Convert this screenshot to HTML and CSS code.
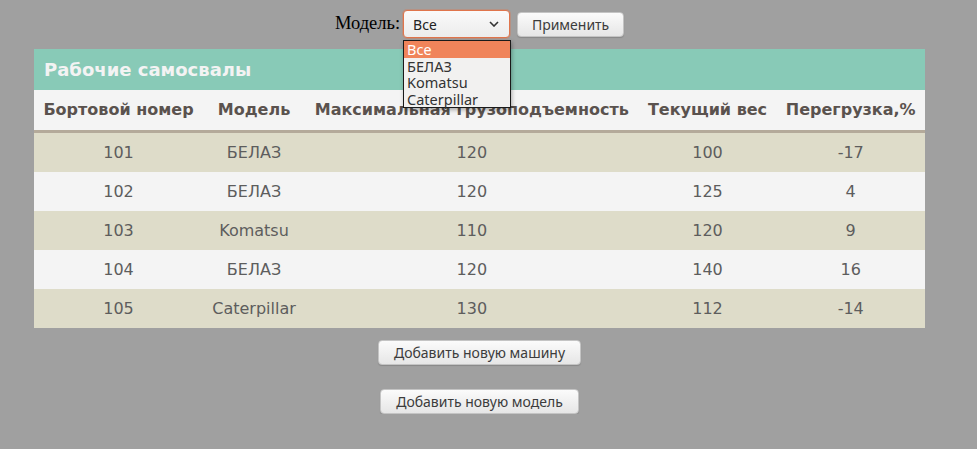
FILE: index.html
```html
<!DOCTYPE html>
<html lang="ru">
<head>
<meta charset="utf-8">
<title>Рабочие самосвалы</title>
<link rel="stylesheet" href="styles.css">
</head>
<body>
<div class="page">
  <form class="filter">
    <label class="filter-label">Модель:</label>
    <div class="select-wrap">
      <div class="select">
        <span>Все</span>
        <svg class="chev" width="10" height="6" viewBox="0 0 10 6"><path d="M1 1 L5 5 L9 1" fill="none" stroke="#333" stroke-width="1.6"/></svg>
      </div>
      <ul class="options">
        <li class="opt active">Все</li>
        <li class="opt">БЕЛАЗ</li>
        <li class="opt">Komatsu</li>
        <li class="opt">Caterpillar</li>
      </ul>
    </div>
    <button type="button" class="btn btn-apply">Применить</button>
  </form>

  <table class="trucks">
    <thead>
      <tr class="title-row"><th colspan="5" class="title">Рабочие самосвалы</th></tr>
      <tr class="head-row">
        <th>Бортовой номер</th>
        <th>Модель</th>
        <th>Максимальная грузоподъемность</th>
        <th>Текущий вес</th>
        <th>Перегрузка,%</th>
      </tr>
    </thead>
    <tbody>
      <tr><td>101</td><td>БЕЛАЗ</td><td>120</td><td>100</td><td>-17</td></tr>
      <tr><td>102</td><td>БЕЛАЗ</td><td>120</td><td>125</td><td>4</td></tr>
      <tr><td>103</td><td>Komatsu</td><td>110</td><td>120</td><td>9</td></tr>
      <tr><td>104</td><td>БЕЛАЗ</td><td>120</td><td>140</td><td>16</td></tr>
      <tr><td>105</td><td>Caterpillar</td><td>130</td><td>112</td><td>-14</td></tr>
    </tbody>
  </table>

  <div class="actions">
    <button type="button" class="btn btn-wide">Добавить новую машину</button>
    <button type="button" class="btn btn-wide">Добавить новую модель</button>
  </div>
</div>
</body>
</html>
```

FILE: styles.css
```css
html, body {
  margin: 0;
  padding: 0;
  background: #a0a0a0;
}
body {
  font-family: "DejaVu Sans", Verdana, sans-serif;
}
.page {
  width: 959px;
  display: flex;
  flex-direction: column;
  align-items: center;
}
.filter {
  display: flex;
  align-items: center;
  margin-top: 10px;
  height: 28px;
}
.filter-label {
  font-family: "Liberation Serif", "Times New Roman", serif;
  font-size: 18.5px;
  color: #000;
  margin-right: 3px;
  position: relative;
  top: -1px;
}
.select-wrap {
  position: relative;
}
.select {
  box-sizing: border-box;
  width: 107px;
  height: 28px;
  border: 1px solid #e0754c;
  border-radius: 4px;
  background: linear-gradient(#fafafa, #ececec);
  box-shadow: 0 0 0 1px rgba(224,117,76,0.35);
  display: flex;
  align-items: center;
  justify-content: space-between;
  padding: 0 10px 0 9px;
  font-family: "Noto Sans", "Open Sans", sans-serif;
  font-size: 14px;
  color: #222;
}
.chev {
  display: block;
}
.options {
  position: absolute;
  left: 0;
  top: 30px;
  box-sizing: border-box;
  width: 108px;
  margin: 0;
  padding: 0;
  list-style: none;
  background: #f2f1f0;
  border: 1px solid #1a1a1a;
  box-shadow: 1px 2px 4px rgba(0,0,0,0.3);
  z-index: 5;
  font-family: "Noto Sans", "Open Sans", sans-serif;
  font-size: 14.5px;
  color: #333;
}
.opt {
  height: 16.5px;
  line-height: 16.5px;
  padding: 0 3px;
}
.opt.active {
  background: #f0845a;
  color: #fff;
}
.btn {
  box-sizing: border-box;
  height: 25px;
  border: 1px solid #c4c4c4;
  border-radius: 4px;
  background: linear-gradient(#fbfbfb, #e6e6e6);
  font-family: "Noto Sans", "Open Sans", sans-serif;
  font-size: 14px;
  color: #3c3c3c;
  padding: 0 12px;
  box-shadow: 0 1px 1px rgba(0,0,0,0.15);
}
.btn-apply {
  margin-left: 7px;
  width: 107px;
  padding: 0;
}
.trucks {
  margin-top: 11px;
  width: 891px;
  border-collapse: collapse;
  border-spacing: 0;
  color: #5d5d5d;
  font-size: 16px;
}
.trucks th, .trucks td {
  padding: 10px 9px;
  text-align: center;
  white-space: nowrap;
}
.title {
  background: #88cab7;
  color: #f3f3f3;
  font-size: 18px;
  text-align: left !important;
  line-height: 21px;
  padding-left: 10px !important;
}
.head-row th {
  background: #f4f4f4;
  color: #5a524e;
  font-size: 16px;
  line-height: 20px;
  border-bottom: 3px solid #b4aa9a;
}
.trucks td {
  line-height: 19px;
}
.trucks tbody tr:nth-child(odd) td {
  background: #dedcc9;
}
.trucks tbody tr:nth-child(even) td {
  background: #f4f4f4;
}
.actions {
  display: flex;
  flex-direction: column;
  align-items: center;
  gap: 24px;
  margin-top: 12px;
}
.btn-wide {
  padding: 0 15px;
}
```
